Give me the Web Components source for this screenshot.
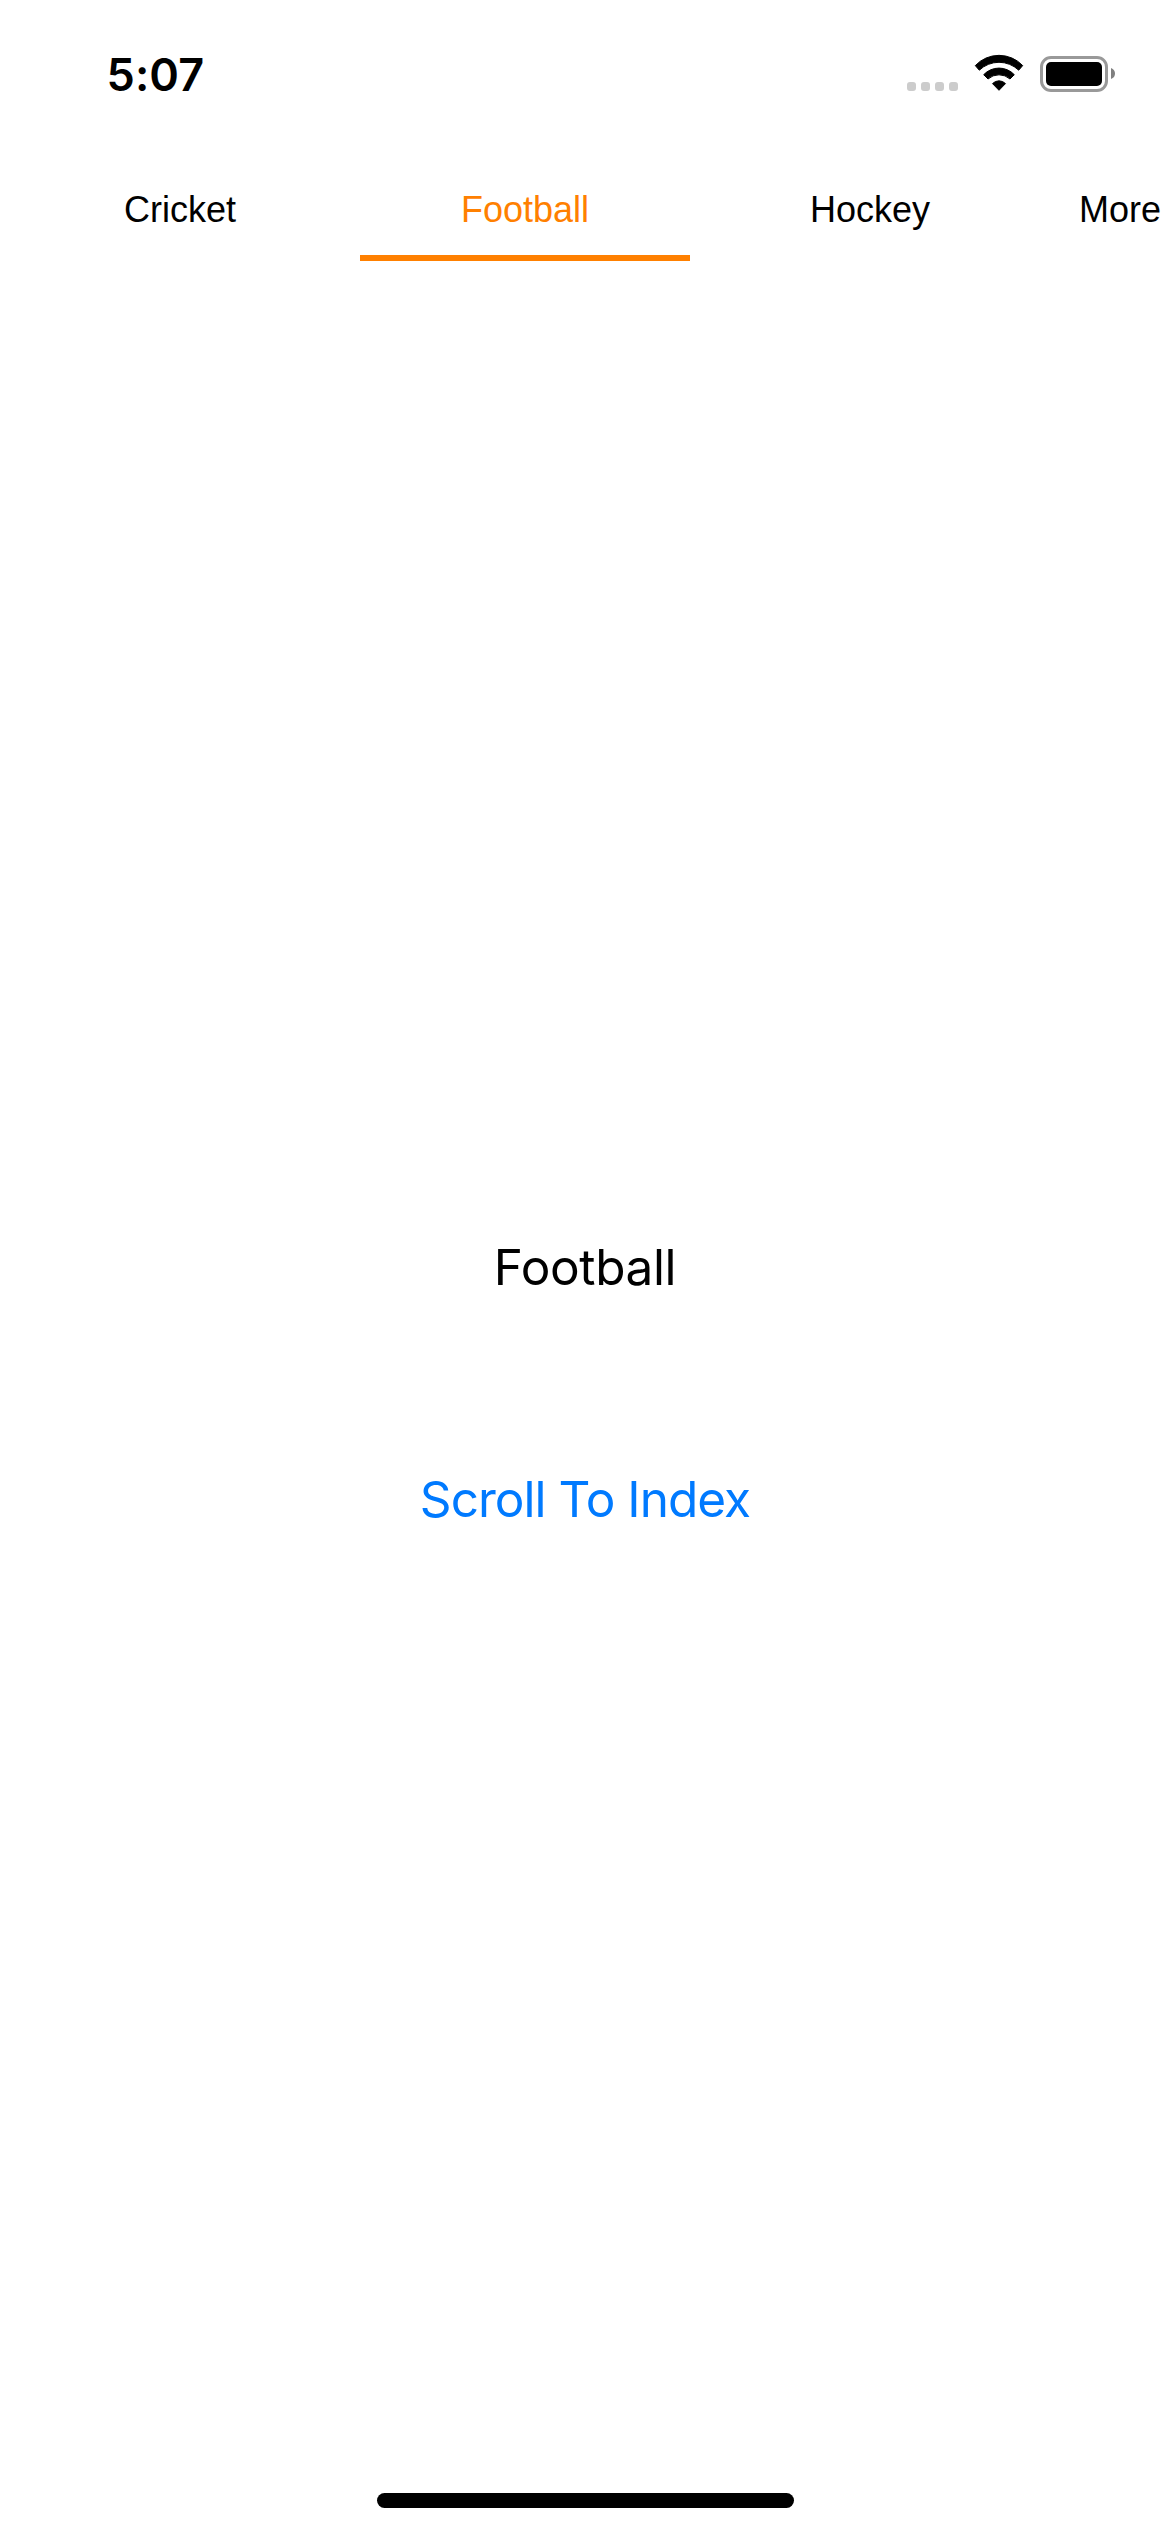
<!DOCTYPE html>
<html lang="en"><head><meta charset="utf-8"><title>Football</title>
<style>html,body{margin:0;background:#fff}</style></head><body>
<phone-screen></phone-screen>
<script>
const define=(name,html)=>customElements.define(name,class extends HTMLElement{
  constructor(){super();this.attachShadow({mode:'open'}).innerHTML=html;}
});
define('status-bar',`<style>
:host{display:flex;height:141px;align-items:flex-start;justify-content:space-between;box-sizing:border-box;padding:47px 55px 0 106.5px}
time{font:600 45px/55px Inter,sans-serif;color:#000;letter-spacing:.1px}
svg{display:block;margin-top:3px}
</style><time>5:07</time>
<svg width="208" height="50" viewBox="907 50 208 50">
<g fill="#ccc"><rect x="907" y="82" width="9" height="9" rx="3"/><rect x="921" y="82" width="9" height="9" rx="3"/><rect x="935" y="82" width="9" height="9" rx="3"/><rect x="949" y="82" width="9" height="9" rx="3"/></g>
<g stroke="#000" stroke-width="1" stroke-linejoin="round"><path d="M975.3 65.6A32.5 32.5 0 0 1 1022.7 65.6L1018.7 70.2A28.5 28.5 0 0 0 979.3 70.2Z"/><path d="M983.7 74.7A21 21 0 0 1 1014.3 74.7L1010 79A16.5 16.5 0 0 0 988 79Z"/><path d="M992.5 83.6A9 9 0 0 1 1005.5 83.6L999 90.3Z"/></g>
<rect x="1041.5" y="57.5" width="65" height="33" rx="9.5" fill="none" stroke="#999" stroke-width="3"/><rect x="1046" y="62" width="56" height="24" rx="5"/><path d="M1111 68Q1115 69.5 1115 73.5T1111 79Z" fill="#808080"/></svg>`);
define('tab-item',`<style>
:host{display:flex;flex:none;box-sizing:border-box;height:120px;width:var(--w,360px);align-items:center;justify-content:center;font:36px/42px "Liberation Sans",Arial,sans-serif;color:#000;padding-top:24px;border-bottom:6px solid transparent}
:host([selected]){color:#ff8000;border-color:#ff8000}
</style><slot></slot>`);
define('tab-strip',`<style>:host{display:flex;overflow:hidden;height:120px}</style><slot></slot>`);
define('page-body',`<style>
:host{display:flex;flex-direction:column;align-items:center;flex:1;font:400 49.5px/60px Inter,sans-serif;padding-top:976px;gap:172px}
p{margin:0;color:#000;letter-spacing:-.38px}
button{all:unset;color:#007aff;letter-spacing:-.96px}
</style><p><slot></slot></p><button>Scroll To Index</button>`);
define('home-indicator',`<style>:host{display:block;width:417px;height:15px;border-radius:7.5px;background:#000;margin:0 auto 24px 377px}</style>`);
define('phone-screen',`<style>:host{display:flex;flex-direction:column;width:1170px;height:2532px;overflow:hidden;background:#fff}</style>
<status-bar></status-bar>
<tab-strip><tab-item>Cricket</tab-item><tab-item selected style="--w:330px">Football</tab-item><tab-item>Hockey</tab-item><tab-item style="--w:140px">More</tab-item></tab-strip>
<page-body>Football</page-body><home-indicator></home-indicator>`);
</script></body></html>
